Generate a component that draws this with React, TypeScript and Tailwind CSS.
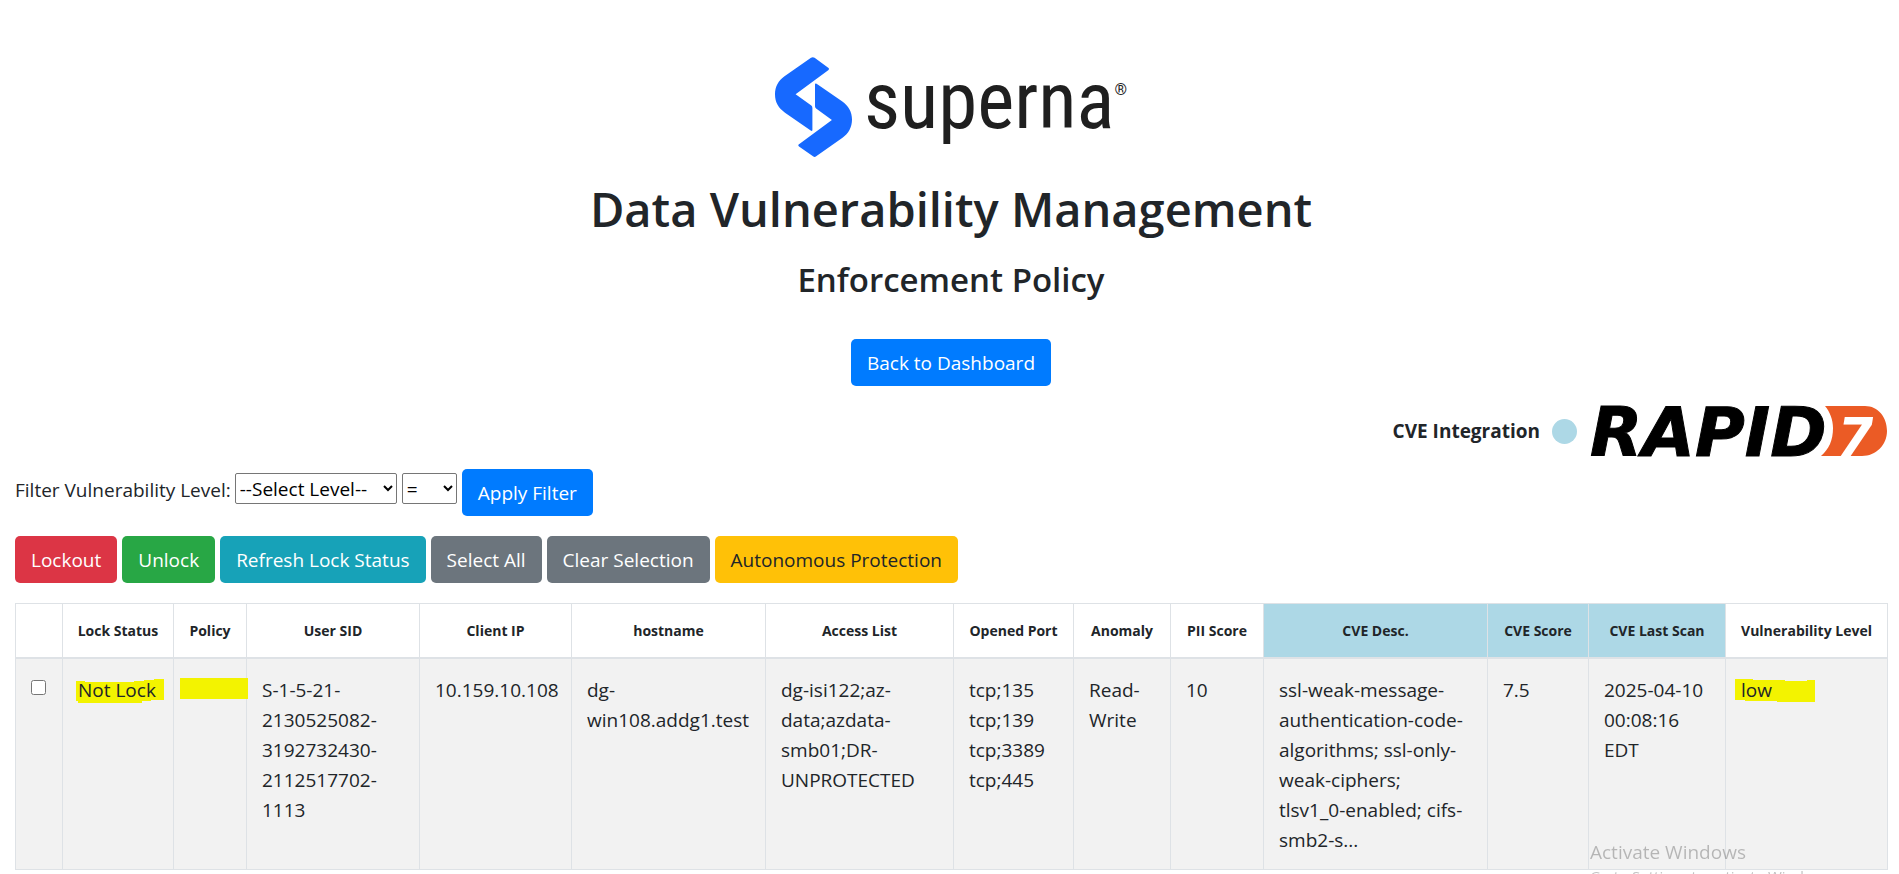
import type { ReactNode } from "react";

const BUTTON =
  "inline-flex h-[47px] items-center justify-center rounded-[5px] px-4 text-[19px] leading-[30px] whitespace-nowrap";

function SupernaLogo() {
  return (
    <div className="flex h-[100px] items-start justify-center">
      <svg width="77" height="100" viewBox="0 0 77 100" fill="#1769ff" aria-hidden="true">
        <path d="M36 .8Q37.8-.4 39.600.8L53.200 10.800Q54.800 12 53.200 13.200L20.600 37.300L36.300 48.600Q37.400 49.400 37.400 51V72.800Q37.400 74.800 35.700 73.600L10 55.700C3.500 51 0 45.500 0 37.300C0 29.500 3.500 23.500 9.500 19.200Z" />
        <path d="M40 27.500Q40 25.700 41.600 26.800L67 44.300C73.500 49 77 54.500 77 62.600C77 70.500 73.500 76.500 67.500 80.800L41.200 99.300Q39.600 100.500 38 99.300L24 89.400Q22.500 88.300 24 87.200L56.900 63L41.100 51.500Q40 50.700 40 49.200Z" />
      </svg>
      <span className="ml-3 mt-2 font-['Roboto_Condensed','Liberation_Sans_Narrow','Roboto',sans-serif] text-[79px] leading-[72px] text-[#1f1f1f]">
        superna
      </span>
      <span className="mt-[25px] font-['Roboto',sans-serif] text-base leading-4 text-[#1f1f1f]">®</span>
    </div>
  );
}

function RapidLogo() {
  return (
    <svg className="overflow-visible" width="297" height="50" viewBox="0 0 297 50" role="img" aria-label="Rapid7">
      <text x="0" y="50" fontSize="68" fontWeight="700" fontStyle="italic" fill="#000" stroke="#000" strokeWidth="1" fontFamily="DejaVu Sans, sans-serif">
        RAPID
      </text>
      <path d="M235 0H275C288 0 297 11 297 25C297 39 286 50 272 50H231C239 43 243 34 243 22C243 14 240 6 235 0Z" fill="#eb5b25" />
      <text x="249" y="50" fontSize="54" fontWeight="800" fontStyle="italic" fill="#fff" fontFamily="Inter, sans-serif">
        7
      </text>
    </svg>
  );
}

type Column = { label: string; width: string; cve?: boolean };

const columns: Column[] = [
  { label: "", width: "w-[47px]" },
  { label: "Lock Status", width: "w-[111px]" },
  { label: "Policy", width: "w-[73px]" },
  { label: "User SID", width: "w-[173px]" },
  { label: "Client IP", width: "w-[152px]" },
  { label: "hostname", width: "w-[194px]" },
  { label: "Access List", width: "w-[188px]" },
  { label: "Opened Port", width: "w-[120px]" },
  { label: "Anomaly", width: "w-[97px]" },
  { label: "PII Score", width: "w-[93px]" },
  { label: "CVE Desc.", width: "w-[224px]", cve: true },
  { label: "CVE Score", width: "w-[101px]", cve: true },
  { label: "CVE Last Scan", width: "w-[137px]", cve: true },
  { label: "Vulnerability Level", width: "w-[162px]" },
];

function Cell({ children }: { children?: ReactNode }) {
  return <td className="border border-[#dee2e6] px-[15px] pt-4 pb-[14px] align-top">{children}</td>;
}

export default function App() {
  return (
    <main className="bg-white pt-[57px] pr-3 pl-[15px] font-['Open_Sans','Noto_Sans',sans-serif] text-[19px] leading-[30px] text-[#212529]">
      <header className="flex flex-col items-center">
        <SupernaLogo />
        <h1 className="mt-[22px] text-[47px] leading-[60px] font-semibold">Data Vulnerability Management</h1>
        <h2 className="mt-[20px] text-[33px] leading-[42px] font-semibold">Enforcement Policy</h2>
        <a href="#dashboard" className={`${BUTTON} mt-[38px] bg-[#007bff] text-white`}>
          Back to Dashboard
        </a>
      </header>

      <div className="mt-5 flex items-center justify-end">
        <span className="font-bold">CVE Integration</span>
        <span className="ml-3 size-[25px] rounded-full bg-[#add8e6]" />
        <span className="ml-[13px]">
          <RapidLogo />
        </span>
      </div>

      <form className="mt-[13px] flex items-start" onSubmit={(e) => e.preventDefault()}>
        <label htmlFor="level" className="mt-[6px]">
          Filter Vulnerability Level:
        </label>
        <select id="level" className="mt-1 ml-1 h-[31px] w-[162px] rounded-[2px] border border-[#767676] bg-white text-black">
          <option>--Select Level--</option>
          <option>low</option>
          <option>medium</option>
          <option>high</option>
        </select>
        <select aria-label="Comparison" className="mt-1 ml-[5px] h-[31px] w-[55px] rounded-[2px] border border-[#767676] bg-white text-black">
          <option>=</option>
          <option>&gt;</option>
          <option>&lt;</option>
        </select>
        <button type="submit" className={`${BUTTON} ml-[5px] bg-[#007bff] text-white`}>
          Apply Filter
        </button>
      </form>

      <div className="mt-5 flex gap-[5px]">
        <button type="button" className={`${BUTTON} bg-[#dc3545] text-white`}>Lockout</button>
        <button type="button" className={`${BUTTON} bg-[#28a745] text-white`}>Unlock</button>
        <button type="button" className={`${BUTTON} bg-[#17a2b8] text-white`}>Refresh Lock Status</button>
        <button type="button" className={`${BUTTON} bg-[#6c757d] text-white`}>Select All</button>
        <button type="button" className={`${BUTTON} bg-[#6c757d] text-white`}>Clear Selection</button>
        <button type="button" className={`${BUTTON} bg-[#ffc107] text-[#212529]`}>Autonomous Protection</button>
      </div>

      <table className="mt-5 w-full table-fixed border-collapse">
        <colgroup>
          {columns.map((c) => (
            <col key={c.label} className={c.width} />
          ))}
        </colgroup>
        <thead>
          <tr className="h-[54px]">
            {columns.map((c) => (
              <th
                key={c.label}
                className={`border border-b-2 border-[#dee2e6] pt-[2px] text-sm leading-6 font-bold whitespace-nowrap ${c.cve ? "bg-[#add8e6]" : "bg-white"}`}
              >
                {c.label}
              </th>
            ))}
          </tr>
        </thead>
        <tbody>
          <tr className="bg-[#f2f2f2]">
            <Cell>
              <input type="checkbox" aria-label="Select row" className="mt-[5px] block size-[15px]" />
            </Cell>
            <Cell>
              <span className="relative whitespace-nowrap">
                <svg className="absolute -left-[2px] top-[2px]" width="88" height="24" viewBox="0 0 88 24" aria-hidden="true">
                  <path d="M0 2H9V3H58V2H68V1H78V0H88V21H75V22H66V24H2V22H0Z" fill="#f3f300" />
                </svg>
                <span className="relative">Not Lock</span>
              </span>
            </Cell>
            <Cell>
              <div className="relative">
                <div className="absolute -left-[9px] top-[3px] h-[21px] w-[68px] bg-[#f3f300]" />
              </div>
            </Cell>
            <Cell>S-1-5-21-2130525082-3192732430-2112517702-1113</Cell>
            <Cell>10.159.10.108</Cell>
            <Cell>dg-win108.addg1.test</Cell>
            <Cell>dg-isi122;az-data;azdata-smb01;DR-UNPROTECTED</Cell>
            <Cell>tcp;135 tcp;139 tcp;3389 tcp;445</Cell>
            <Cell>Read-Write</Cell>
            <Cell>10</Cell>
            <Cell>
              ssl-weak-message-authentication-code-algorithms; ssl-only-weak-ciphers;
              <br />
              tlsv1_0-enabled; cifs-smb2-s...
            </Cell>
            <Cell>7.5</Cell>
            <Cell>2025-04-10 00:08:16 EDT</Cell>
            <Cell>
              <span className="relative">
                <svg className="absolute -left-[6px] top-[2px]" width="80" height="23" viewBox="0 0 80 23" aria-hidden="true">
                  <path d="M0 0H18V1H50V2H72V1H80V23H42V22H10V21H0Z" fill="#f3f300" />
                </svg>
                <span className="relative">low</span>
              </span>
            </Cell>
          </tr>
        </tbody>
      </table>

      <aside className="pointer-events-none fixed top-[839px] right-0 w-[309px] whitespace-nowrap text-black/25">
        <p className="text-[19px] leading-[27px]">Activate Windows</p>
        <p className="text-[15px] leading-5">Go to Settings to activate Windows.</p>
      </aside>
    </main>
  );
}
